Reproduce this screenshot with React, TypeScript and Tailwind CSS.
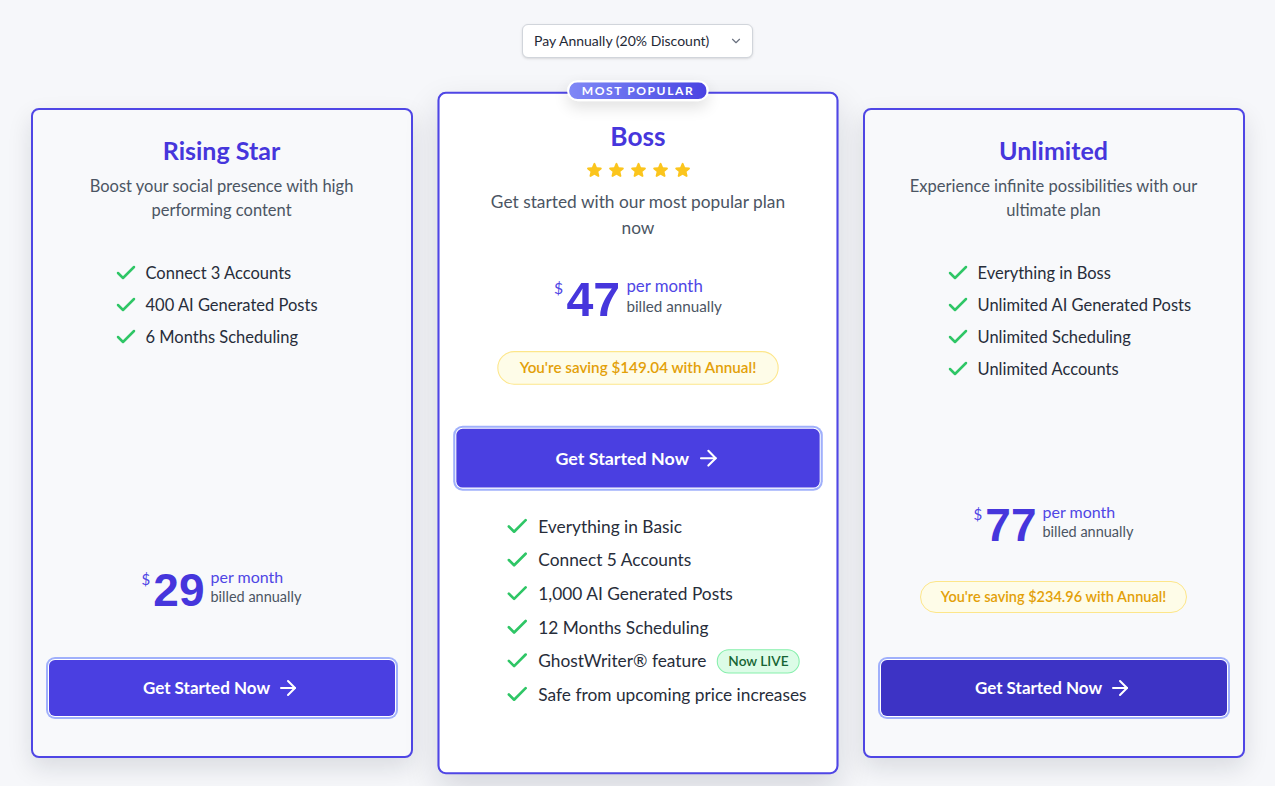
import {Check, ArrowRight, ChevronDown} from 'lucide-react';

type Plan = {
    name: string;
    description: string;
    features: string[];
    price: string;
    saving?: string;
    buttonClass: string;
};

const sidePlans: Plan[] = [
    {
        name: 'Rising Star',
        description: 'Boost your social presence with high performing content',
        features: ['Connect 3 Accounts', '400 AI Generated Posts', '6 Months Scheduling'],
        price: '29',
        buttonClass: 'bg-[#4a3fe1]'
    },
    {
        name: 'Unlimited',
        description: 'Experience infinite possibilities with our ultimate plan',
        features: ['Everything in Boss', 'Unlimited AI Generated Posts', 'Unlimited Scheduling', 'Unlimited Accounts'],
        price: '77',
        saving: "You're saving $234.96 with Annual!",
        buttonClass: 'bg-[#3d33c5]'
    }
];

const bossFeatures = [
    'Everything in Basic',
    'Connect 5 Accounts',
    '1,000 AI Generated Posts',
    '12 Months Scheduling',
    'GhostWriter® feature',
    'Safe from upcoming price increases'
];

function Price({amount}: {amount: string}) {
    return (
        <div className="flex items-start justify-center">
            <span className="mt-[5px] mr-[3px] text-[15px] leading-none text-[#4f46e5]">$</span>
            <span className="mr-[6px] text-[46px] leading-none font-bold text-[#4636dc] [font-family:'Liberation_Sans',Arial,sans-serif]">
                {amount}
            </span>
            <div className="flex flex-col">
                <span className="text-base leading-5 text-[#4f46e5]">per month</span>
                <span className="text-[14.5px] leading-5 text-[#4b5563]">billed annually</span>
            </div>
        </div>
    );
}

function SavingPill({text}: {text: string}) {
    return (
        <div className="mx-auto w-fit rounded-full border border-[#fde68a] bg-[#fefce8] px-5 py-[5px] text-[14.5px] leading-5 font-semibold text-[#e3a008]">
            {text}
        </div>
    );
}

function StartButton({className}: {className: string}) {
    return (
        <button
            className={`flex h-14 w-full items-center justify-center gap-[6px] rounded-md text-[17px] font-bold text-white ring-2 ring-[#a0b0fb] ring-offset-1 ${className}`}
        >
            Get Started Now
            <ArrowRight className="h-6 w-6" strokeWidth={2}/>
        </button>
    );
}

function Feature({text, children}: {text: string; children?: React.ReactNode}) {
    return (
        <li className="flex items-center gap-2 text-[16.5px] leading-6 text-[#272d3a]">
            <Check className="h-6 w-6 shrink-0 text-[#2fc666]" strokeWidth={2.5}/>
            <span>{text}</span>
            {children}
        </li>
    );
}

function SideCard({plan}: {plan: Plan}) {
    return (
        <div className="flex h-[650px] w-[382px] flex-col rounded-lg border-2 border-[#4f46e5] bg-[#f8f9fb] px-4 pt-6 pb-10 shadow-[0_10px_24px_rgba(17,24,39,0.12)]">
            <h2 className="text-center text-[25px] leading-8 font-bold text-[#4636dc]">{plan.name}</h2>
            <p className="mx-auto mt-2 max-w-[300px] text-center text-[16.5px] leading-6 text-[#4b5563]">
                {plan.description}
            </p>
            <ul className="mt-[39px] flex flex-col gap-2 pl-[65px]">
                {plan.features.map((f) => (
                    <Feature key={f} text={f}/>
                ))}
            </ul>
            <div className="mt-auto">
                <Price amount={plan.price}/>
                {plan.saving && (
                    <div className="mt-[33px]">
                        <SavingPill text={plan.saving}/>
                    </div>
                )}
                <div className="mt-[47px]">
                    <StartButton className={plan.buttonClass}/>
                </div>
            </div>
        </div>
    );
}

function Star() {
    return (
        <svg className="h-[17px] w-[17px] text-[#fbc51d]" viewBox="0 0 24 24" fill="currentColor">
            <path
                fillRule="evenodd"
                d="M10.788 3.21c.448-1.077 1.976-1.077 2.424 0l2.082 5.006 5.404.434c1.164.093 1.636 1.545.749 2.305l-4.117 3.527 1.257 5.273c.271 1.136-.964 2.033-1.96 1.425L12 18.354 7.373 21.18c-.996.608-2.231-.29-1.96-1.425l1.257-5.273-4.117-3.527c-.887-.76-.415-2.212.749-2.305l5.404-.434 2.082-5.005Z"
                clipRule="evenodd"
            />
        </svg>
    );
}

function BossCard() {
    return (
        <div className="relative z-10 flex h-[650px] w-[382px] scale-105 flex-col rounded-lg border-2 border-[#4f46e5] bg-white px-4 pt-6 shadow-[0_14px_32px_rgba(17,24,39,0.14)]">
            <div className="absolute -top-[13px] left-1/2 flex h-[20px] -translate-x-1/2 items-center rounded-full border-2 border-white bg-linear-to-r from-[#8088f6] to-[#4a42e2] px-[12px] text-[11.5px] font-bold tracking-[0.13em] whitespace-nowrap text-white shadow-[0_6px_14px_rgba(0,0,0,0.12)]">
                MOST POPULAR
            </div>
            <h2 className="text-center text-[25px] leading-8 font-bold text-[#4636dc]">Boss</h2>
            <div className="mt-2 flex justify-center gap-1">
                <Star/>
                <Star/>
                <Star/>
                <Star/>
                <Star/>
            </div>
            <p className="mx-auto mt-[10px] max-w-[300px] text-center text-[16.5px] leading-6 text-[#4b5563]">
                Get started with our most popular plan now
            </p>
            <div className="mt-[34px]">
                <Price amount="47"/>
            </div>
            <div className="mt-[26px]">
                <SavingPill text="You're saving $149.04 with Annual!"/>
            </div>
            <div className="mt-[42px]">
                <StartButton className="bg-[#4a3fe1]"/>
            </div>
            <ul className="mt-[25px] flex flex-col gap-2 pl-[46px]">
                {bossFeatures.map((f) => (
                    <Feature key={f} text={f}>
                        {f.startsWith('GhostWriter') && (
                            <span className="ml-0.5 rounded-full border border-[#86efac] bg-[#dcfce7] px-[10px] text-[13px] leading-[21px] font-semibold text-[#166534]">
                                Now LIVE
                            </span>
                        )}
                    </Feature>
                ))}
            </ul>
        </div>
    );
}

export default function App() {
    return (
        <div className="min-h-screen bg-[#f6f7fa] pt-6 [font-family:Lato,sans-serif]">
            <div className="flex justify-center">
                <button className="flex h-[34px] w-[231px] items-center justify-between rounded-md border border-[#d1d5db] bg-white pr-[9px] pl-[11px] text-sm text-[#1f2937] shadow-sm">
                    Pay Annually (20% Discount)
                    <ChevronDown className="h-[14px] w-[14px] text-[#6b7280]" strokeWidth={2}/>
                </button>
            </div>

            <div className="mt-[50px] flex items-center justify-center gap-[34px]">
                <SideCard plan={sidePlans[0]}/>
                <BossCard/>
                <SideCard plan={sidePlans[1]}/>
            </div>
        </div>
    );
}
